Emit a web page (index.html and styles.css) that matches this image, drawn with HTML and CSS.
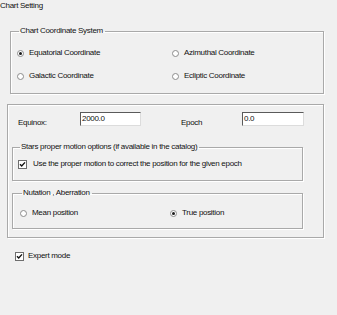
FILE: index.html
```html
<!DOCTYPE html>
<html lang="en">
<head>
    <meta charset="UTF-8">
    <title>Chart Setting</title>
    <link rel="stylesheet" href="styles.css">
</head>
<body>
    <div class="title">Chart Setting</div>

    <!-- Coordinate system -->
    <fieldset class="group coord-group">
        <legend>Chart Coordinate System</legend>
        <div class="option-grid coord-grid">
            <label class="option"><span class="radio checked"></span>Equatorial Coordinate</label>
            <label class="option"><span class="radio"></span>Azimuthal Coordinate</label>
            <label class="option"><span class="radio"></span>Galactic Coordinate</label>
            <label class="option"><span class="radio"></span>Ecliptic Coordinate</label>
        </div>
    </fieldset>

    <!-- Expert panel -->
    <div class="panel">
        <div class="epoch-row">
            <span class="field-label equinox-label">Equinox:</span>
            <span class="text-input equinox-input">2000.0</span>
            <span class="field-label epoch-label">Epoch</span>
            <span class="text-input epoch-input">0.0</span>
        </div>

        <fieldset class="group inner-group stars-group">
            <legend>Stars proper motion options (if available in the catalog)</legend>
            <label class="option check-option">
                <svg class="checkbox" width="9" height="9" viewBox="0 0 9 9">
                    <rect x="0.5" y="0.5" width="8" height="8" fill="#fff" stroke="#6e6e6e"/>
                    <polyline points="2,4.2 3.7,6 7,2.4" fill="none" stroke="#111" stroke-width="1.4"/>
                </svg>
                Use the proper motion to correct the position for the given epoch
            </label>
        </fieldset>

        <fieldset class="group inner-group nutation-group">
            <legend>Nutation , Aberration</legend>
            <div class="option-grid nutation-grid">
                <label class="option"><span class="radio"></span>Mean position</label>
                <label class="option"><span class="radio checked"></span>True position</label>
            </div>
        </fieldset>
    </div>

    <label class="option expert">
        <svg class="checkbox" width="9" height="9" viewBox="0 0 9 9">
            <rect x="0.5" y="0.5" width="8" height="8" fill="#fff" stroke="#6e6e6e"/>
            <polyline points="2,4.2 3.7,6 7,2.4" fill="none" stroke="#111" stroke-width="1.4"/>
        </svg>
        Expert mode
    </label>
</body>
</html>
```

FILE: styles.css
```css
/* Base */
* {
    box-sizing: border-box;
}

body {
    margin: 0;
    background-color: #f0f0f0;
    color: #111;
    font-family: "Liberation Sans", Arial, sans-serif;
    font-size: 8px;
    line-height: 10px;
    letter-spacing: -0.3px;
}

.title {
    height: 11px;
    padding-top: 1px;
}

/* Group boxes */
.group {
    margin: 0;
    padding: 0;
    border: 1px solid #a9a9a9;
    box-shadow: 1px 1px 0 #fff, inset 1px 1px 0 #fff;
    min-width: 0;
}

.group legend {
    padding: 0 2px 0 1px;
    margin-left: 2px;
    line-height: 10px;
}

.coord-group {
    margin: 15px 0 0 10px;
    width: 314px;
    padding: 11px 0 11px 6px;
}

.option-grid {
    display: grid;
    row-gap: 11px;
}

.coord-grid {
    grid-template-columns: 155px 1fr;
}

.option {
    display: flex;
    align-items: center;
    height: 12px;
    white-space: nowrap;
}

/* Radio buttons */
.radio {
    width: 7px;
    height: 7px;
    border-radius: 50%;
    border: 1px solid #8c8c8c;
    background-color: #fff;
    margin-right: 5px;
    display: flex;
    align-items: center;
    justify-content: center;
    flex-shrink: 0;
}

.radio.checked::after {
    content: "";
    width: 3px;
    height: 3px;
    border-radius: 50%;
    background-color: #1a1a1a;
}

.checkbox {
    flex-shrink: 0;
    margin-right: 5px;
}

/* Panel */
.panel {
    margin: 10px 0 0 7px;
    width: 317px;
    padding: 7px 0 8px 4px;
    border: 1px solid #a9a9a9;
    box-shadow: 1px 1px 0 #fff, inset 1px 1px 0 #fff;
}

.epoch-row {
    display: flex;
    align-items: flex-start;
    height: 14px;
}

.field-label {
    padding-top: 6px;
}

.equinox-label {
    width: 68px;
    padding-left: 6px;
}

.epoch-label {
    margin-left: 40px;
    width: 61px;
}

.text-input {
    height: 14px;
    background-color: #fff;
    border-top: 1px solid #5a5a5a;
    border-left: 1px solid #5a5a5a;
    border-right: 1px solid #dcdcdc;
    border-bottom: 1px solid #dcdcdc;
    padding: 1px 0 0 1px;
    line-height: 10px;
}

.equinox-input {
    width: 61px;
}

.epoch-input {
    width: 62px;
}

.inner-group {
    width: 291px;
}

.stars-group {
    margin-top: 16px;
    padding: 6px 0 10px 5px;
}

.nutation-group {
    margin-top: 7px;
    padding: 9px 0 9px 7px;
}

.nutation-grid {
    grid-template-columns: 150px 1fr;
}

.check-option .checkbox {
    margin-right: 6px;
}

/* Expert mode */
.expert {
    margin: 12px 0 0 15px;
}

.expert .checkbox {
    margin-right: 4px;
}
```
